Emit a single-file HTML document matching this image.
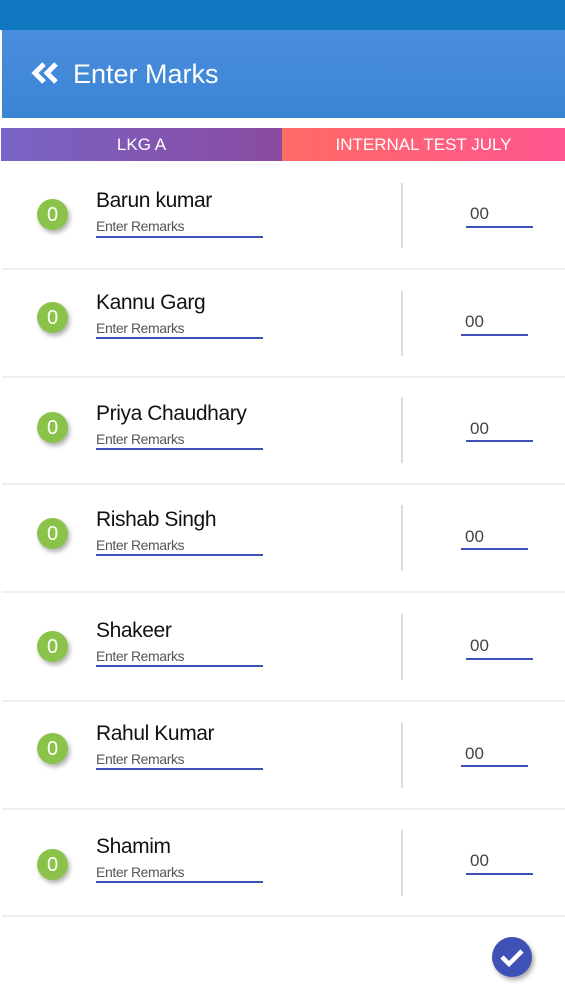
<!DOCTYPE html>
<html><head><meta charset="utf-8"><style>
*{margin:0;padding:0;box-sizing:border-box}
body{width:565px;height:1003px;position:relative;background:#fff;font-family:"Liberation Sans",sans-serif;overflow:hidden}
.a{position:absolute}
.circ{position:absolute;width:31px;height:31px;border-radius:50%;background:#8bc34a;color:#fff;font-size:20px;text-align:center;line-height:32px;box-shadow:2px 3px 5px rgba(0,0,0,.3)}
.name{position:absolute;left:96px;font-size:21px;color:#111;line-height:24px;letter-spacing:-.4px}
.rem{position:absolute;left:96px;font-size:14px;color:#555;line-height:16px;letter-spacing:-.4px}
.ul{position:absolute;left:96px;width:167px;height:2px;background:#3f51b5}
.vl{position:absolute;left:401px;width:2px;background:#ddd}
.mk{position:absolute;font-size:17px;color:#444;line-height:20px}
.mu{position:absolute;width:67px;height:2px;background:#3f51b5}
.sep{position:absolute;left:2px;right:0;height:2px;background:#eee}
</style></head><body>
<div class="a" style="left:0;top:0;width:565px;height:30px;background:#0f78c0"></div>
<div class="a" style="left:2px;top:30px;width:563px;height:88px;background:linear-gradient(#4b8ddd,#3a85d4)"></div>
<svg class="a" style="left:31px;top:61px" width="30" height="26" viewBox="0 0 30 26"><path d="M13 3 L4 12 L13 21 M25 3 L16 12 L25 21" fill="none" stroke="#fff" stroke-width="5" stroke-linejoin="miter"/></svg>
<div class="a" style="left:73px;top:58px;font-size:27px;color:#fff;line-height:32px">Enter Marks</div>
<div class="a" style="left:1px;top:128px;width:281px;height:33px;background:linear-gradient(90deg,#7864c6,#8a4aa0);color:#fff;font-size:17px;text-align:center;line-height:33px">LKG A</div>
<div class="a" style="left:282px;top:128px;width:283px;height:33px;background:linear-gradient(90deg,#ff6b66,#ff5590);color:#fff;font-size:17px;text-align:center;line-height:33px">INTERNAL TEST JULY</div>

<div class="circ" style="left:37px;top:199px">0</div><div class="name" style="top:189px">Barun kumar</div><div class="rem" style="top:218px">Enter Remarks</div><div class="ul" style="top:236px"></div><div class="vl" style="top:183px;height:65px"></div><div class="mk" style="left:470px;top:204px">00</div><div class="mu" style="left:466px;top:226px"></div><div class="sep" style="top:268px"></div>

<div class="circ" style="left:37px;top:302px">0</div><div class="name" style="top:291px">Kannu Garg</div><div class="rem" style="top:320px">Enter Remarks</div><div class="ul" style="top:337px"></div><div class="vl" style="top:291px;height:65px"></div><div class="mk" style="left:465px;top:312px">00</div><div class="mu" style="left:461px;top:334px"></div><div class="sep" style="top:376px"></div>

<div class="circ" style="left:37px;top:412px">0</div><div class="name" style="top:402px">Priya Chaudhary</div><div class="rem" style="top:431px">Enter Remarks</div><div class="ul" style="top:448px"></div><div class="vl" style="top:397px;height:66px"></div><div class="mk" style="left:470px;top:419px">00</div><div class="mu" style="left:466px;top:440px"></div><div class="sep" style="top:483px"></div>

<div class="circ" style="left:37px;top:518px">0</div><div class="name" style="top:508px">Rishab Singh</div><div class="rem" style="top:537px">Enter Remarks</div><div class="ul" style="top:554px"></div><div class="vl" style="top:505px;height:66px"></div><div class="mk" style="left:465px;top:527px">00</div><div class="mu" style="left:461px;top:548px"></div><div class="sep" style="top:591px"></div>

<div class="circ" style="left:37px;top:631px">0</div><div class="name" style="top:619px">Shakeer</div><div class="rem" style="top:648px">Enter Remarks</div><div class="ul" style="top:665px"></div><div class="vl" style="top:614px;height:66px"></div><div class="mk" style="left:470px;top:636px">00</div><div class="mu" style="left:466px;top:658px"></div><div class="sep" style="top:700px"></div>

<div class="circ" style="left:37px;top:733px">0</div><div class="name" style="top:722px">Rahul Kumar</div><div class="rem" style="top:751px">Enter Remarks</div><div class="ul" style="top:768px"></div><div class="vl" style="top:722px;height:66px"></div><div class="mk" style="left:465px;top:744px">00</div><div class="mu" style="left:461px;top:765px"></div><div class="sep" style="top:808px"></div>

<div class="circ" style="left:37px;top:849px">0</div><div class="name" style="top:835px">Shamim</div><div class="rem" style="top:864px">Enter Remarks</div><div class="ul" style="top:881px"></div><div class="vl" style="top:830px;height:66px"></div><div class="mk" style="left:470px;top:851px">00</div><div class="mu" style="left:466px;top:873px"></div><div class="sep" style="top:915px"></div>

<div class="a" style="left:492px;top:937px;width:40px;height:40px;border-radius:50%;background:#3f51b5;box-shadow:2px 3px 5px rgba(0,0,0,.35)"></div>
<svg class="a" style="left:492px;top:937px" width="40" height="40" viewBox="0 0 40 40"><path d="M10 20 L17 27 L30 14" fill="none" stroke="#fff" stroke-width="4.5"/></svg>
</body></html>
